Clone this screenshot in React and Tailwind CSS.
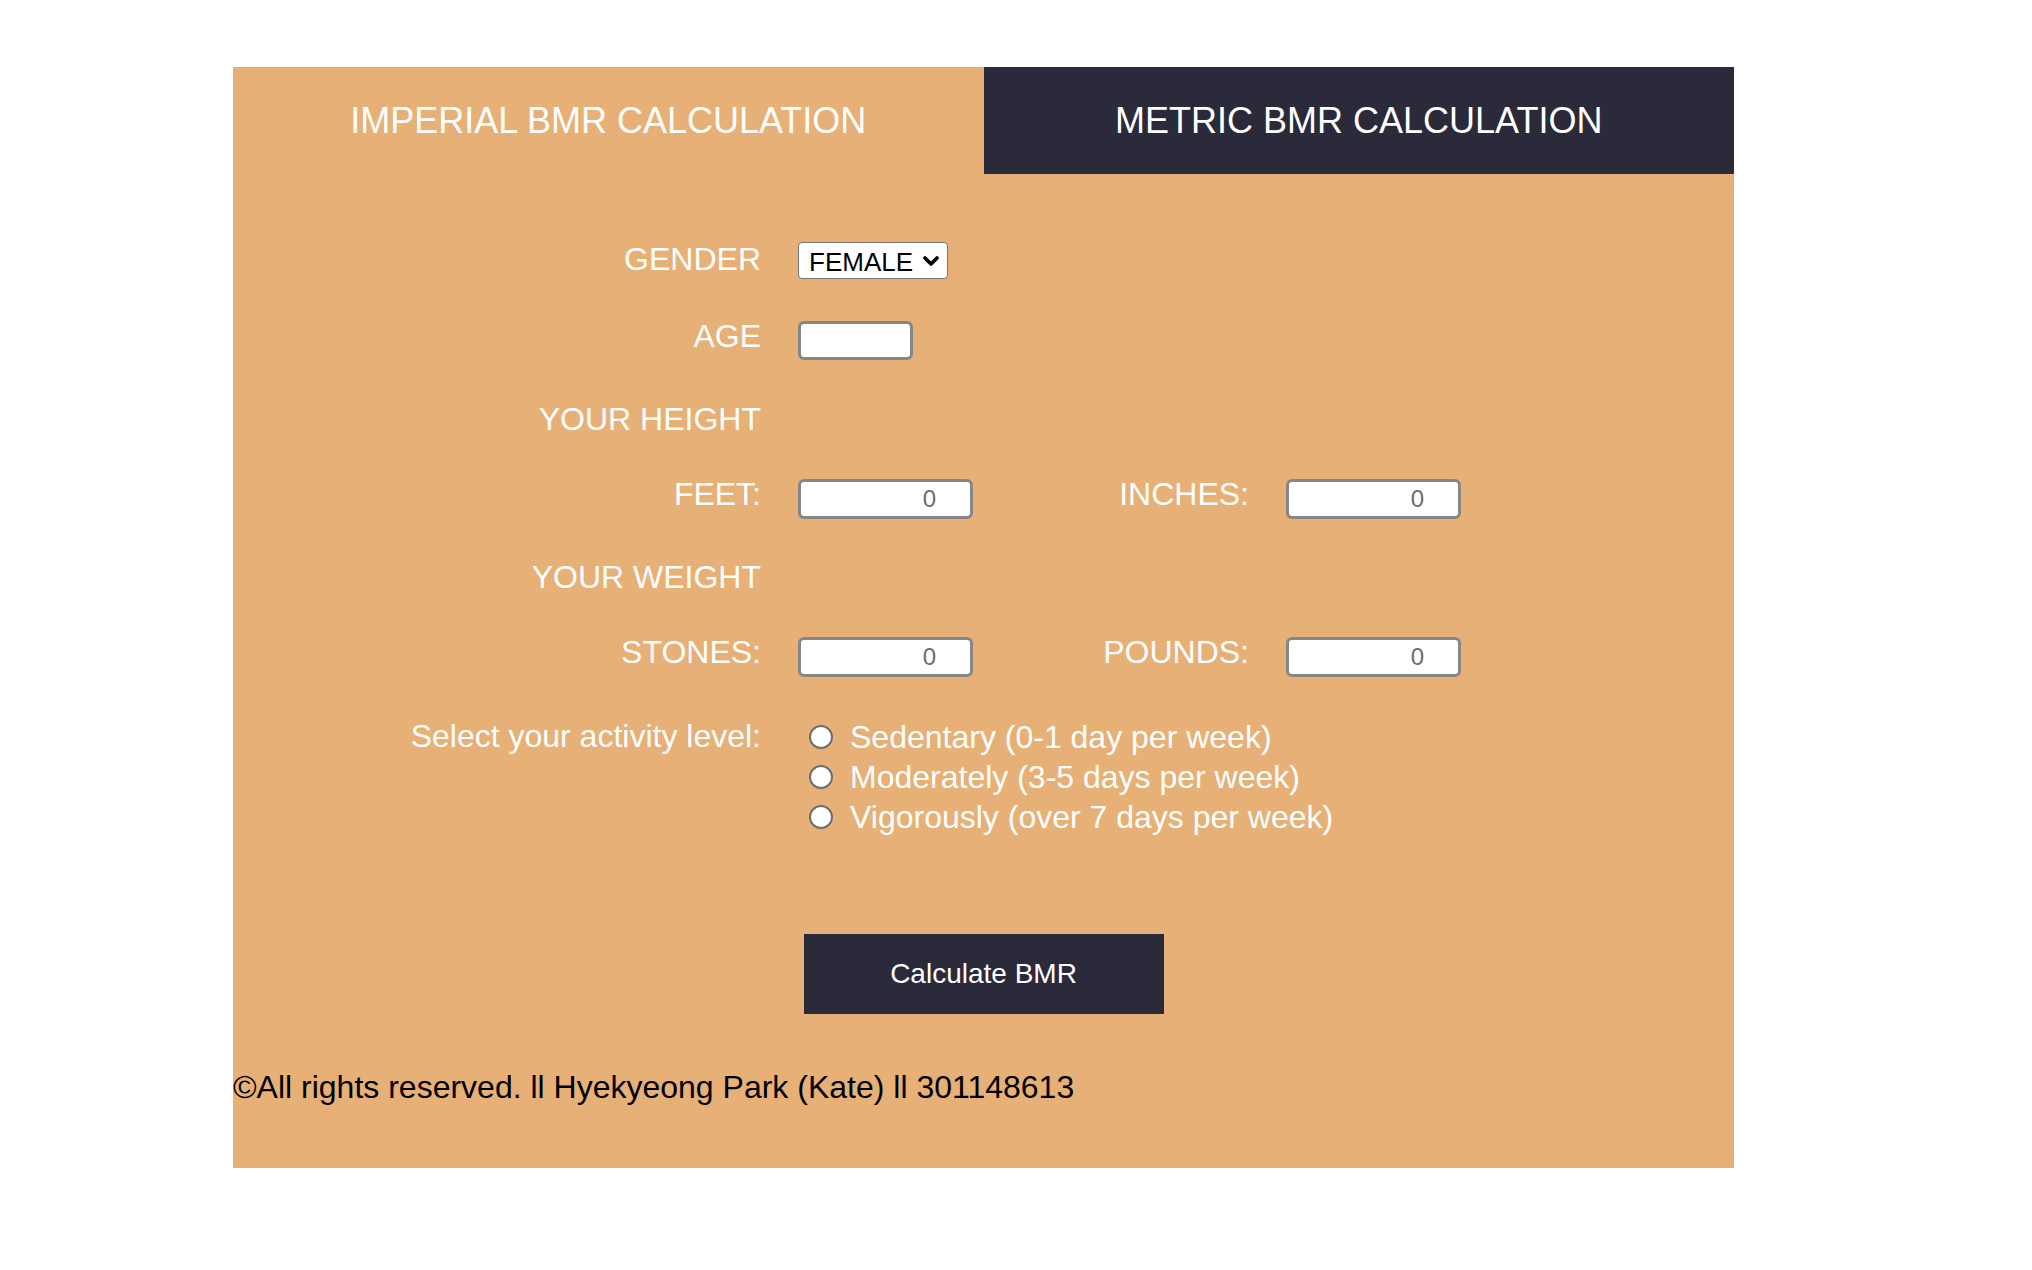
import { useState } from 'react';

const ORANGE = 'bg-[#e6b077]';

const NumberField = ({ value, onChange }) => (
  <input
    type="text"
    value={value}
    onChange={(e) => onChange(e.target.value)}
    className="w-[175px] h-[40px] bg-white border-[3px] border-[#868686] rounded-[6px] text-right pr-[34px] text-[24px] text-[#6d6d6d] outline-none"
  />
);

const Label = ({ children, w = 'w-[565px]', lift = true }) => (
  <div className={`${w} shrink-0 text-right text-white text-[32px] leading-[37px] pr-[37px] ${lift ? 'mb-[9px]' : ''}`}>
    {children}
  </div>
);

export default function App() {
  const [tab, setTab] = useState('imperial');
  const [gender, setGender] = useState('female');
  const [age, setAge] = useState('');
  const [vals, setVals] = useState({ feet: '0', inches: '0', stones: '0', pounds: '0' });
  const [activity, setActivity] = useState('');

  const set = (k) => (v) => setVals((s) => ({ ...s, [k]: v }));

  const levels = [
    ['sedentary', 'Sedentary (0-1 day per week)'],
    ['moderate', 'Moderately (3-5 days per week)'],
    ['vigorous', 'Vigorously (over 7 days per week)'],
  ];

  return (
    <div className="min-h-screen bg-white font-['Liberation_Sans',Arial,sans-serif] pt-[67px] pl-[233px]">
      <div className={`w-[1501px] h-[1101px] ${ORANGE} flex flex-col`}>
        {/* tabs */}
        <div className="flex h-[107px]">
          <button
            onClick={() => setTab('imperial')}
            className={`w-1/2 h-full text-white text-[36px] ${tab === 'imperial' ? ORANGE : 'bg-[#2b2a3b]'}`}
          >
            IMPERIAL BMR CALCULATION
          </button>
          <button
            onClick={() => setTab('metric')}
            className={`w-1/2 h-full text-white text-[36px] ${tab === 'metric' ? ORANGE : 'bg-[#2b2a3b]'}`}
          >
            METRIC BMR CALCULATION
          </button>
        </div>

        <div className="pt-[46px] flex flex-col">
          <div className="flex items-center h-[81px]">
            <Label>
              <span className="block mb-[-6px]">GENDER</span>
            </Label>
            <div className="relative w-[150px] h-[37px]">
              <select
                value={gender}
                onChange={(e) => setGender(e.target.value)}
                className="appearance-none w-full h-full bg-white border border-[#767676] rounded-[4px] pl-[10px] text-[26px] text-black outline-none"
              >
                <option value="female">FEMALE</option>
                <option value="male">MALE</option>
              </select>
              <svg className="absolute right-[9px] top-[14px] pointer-events-none" width="16" height="10" viewBox="0 0 16 10">
                <path d="M2 2 L8 8 L14 2" fill="none" stroke="black" strokeWidth="3.6" strokeLinecap="round" strokeLinejoin="round" />
              </svg>
            </div>
          </div>

          <div className="flex items-center h-[79px]">
            <Label>AGE</Label>
            <input
              type="text"
              value={age}
              onChange={(e) => setAge(e.target.value)}
              className="w-[115px] h-[39px] bg-white border-[3px] border-[#868686] rounded-[6px] text-[24px] px-2 outline-none"
            />
          </div>

          <div className="flex items-center h-[78px]">
            <Label lift={false}>YOUR HEIGHT</Label>
          </div>

          <div className="flex items-center h-[82px]">
            <Label>FEET:</Label>
            <NumberField value={vals.feet} onChange={set('feet')} />
            <Label w="w-[313px]">INCHES:</Label>
            <NumberField value={vals.inches} onChange={set('inches')} />
          </div>

          <div className="flex items-center h-[74px]">
            <Label lift={false}>YOUR WEIGHT</Label>
          </div>

          <div className="flex items-center h-[86px]">
            <Label>STONES:</Label>
            <NumberField value={vals.stones} onChange={set('stones')} />
            <Label w="w-[313px]">POUNDS:</Label>
            <NumberField value={vals.pounds} onChange={set('pounds')} />
          </div>

          <div className="flex mt-[17px]">
            <div className="w-[565px] shrink-0 pr-[37px] text-right text-white text-[32px] leading-[36px] pt-[1px]">
              Select your activity level:
            </div>
            <div className="flex flex-col">
              {levels.map(([key, text]) => (
                <label key={key} className="flex items-center h-[40px] pl-[11px] text-white text-[32px] cursor-pointer">
                  <input
                    type="radio"
                    name="activity"
                    checked={activity === key}
                    onChange={() => setActivity(key)}
                    className="appearance-none w-[24px] h-[24px] rounded-full bg-white border-2 border-[#6f6f6f] checked:border-[7px] checked:border-[#2b2a3b] shrink-0"
                  />
                  <span className="ml-[17px]">{text}</span>
                </label>
              ))}
            </div>
          </div>

          <button className="mt-[97px] mx-auto w-[360px] h-[80px] bg-[#2b2a3b] text-white text-[28px]">
            Calculate BMR
          </button>

          <p className="mt-[55px] text-black text-[32px] leading-[36px]">
            ©All rights reserved. ll Hyekyeong Park (Kate) ll 301148613
          </p>
        </div>
      </div>
    </div>
  );
}
